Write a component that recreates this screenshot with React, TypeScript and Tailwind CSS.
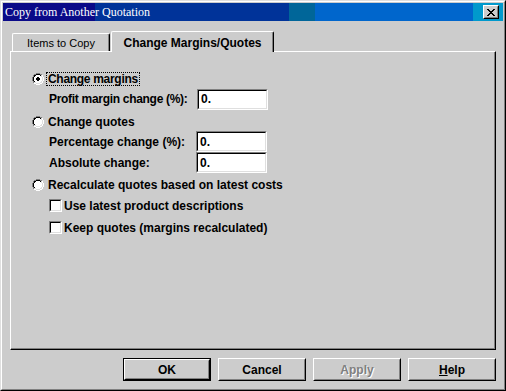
import React from "react";

const SANS = "font-['Liberation_Sans',Arial,sans-serif]";

function Radio({ checked }: { checked: boolean }) {
  const outer: number[][] = [
    [0, 4], [0, 5], [0, 6], [0, 7], [1, 2], [1, 3], [1, 8], [1, 9], [2, 1], [2, 10], [3, 1], [3, 10],
    [4, 0], [4, 11], [5, 0], [5, 11], [6, 0], [6, 11], [7, 0], [7, 11], [8, 1], [8, 10], [9, 1], [9, 10],
    [10, 2], [10, 3], [10, 8], [10, 9], [11, 4], [11, 5], [11, 6], [11, 7],
  ];
  const inner: number[][] = [
    [1, 4], [1, 5], [1, 6], [1, 7], [2, 2], [2, 3], [2, 8], [2, 9], [3, 2], [3, 9], [4, 1], [4, 10],
    [5, 1], [5, 10], [6, 1], [6, 10], [7, 1], [7, 10], [8, 2], [8, 9], [9, 2], [9, 3], [9, 8], [9, 9],
    [10, 4], [10, 5], [10, 6], [10, 7],
  ];
  const interior: number[][] = [];
  const spans: [number, number, number][] = [
    [2, 4, 7], [3, 3, 8], [4, 2, 9], [5, 2, 9], [6, 2, 9], [7, 2, 9], [8, 3, 8], [9, 4, 7],
  ];
  spans.forEach(([r, a, b]) => {
    for (let c = a; c <= b; c++) interior.push([r, c]);
  });
  const dot: number[][] = [
    [4, 5], [4, 6], [5, 4], [5, 5], [5, 6], [5, 7], [6, 4], [6, 5], [6, 6], [6, 7], [7, 5], [7, 6],
  ];
  return (
    <svg width="12" height="12" viewBox="0 0 12 12" shapeRendering="crispEdges" className="shrink-0">
      {interior.map(([r, c]) => (
        <rect key={"i" + r + "-" + c} x={c} y={r} width="1" height="1" fill="#ffffff" />
      ))}
      {outer.map(([r, c]) => (
        <rect key={"o" + r + "-" + c} x={c} y={r} width="1" height="1" fill={r + c < 11 ? "#808080" : "#ffffff"} />
      ))}
      {inner.map(([r, c]) => (
        <rect key={"n" + r + "-" + c} x={c} y={r} width="1" height="1" fill={r + c < 11 ? "#000000" : "#dfdfdf"} />
      ))}
      {checked &&
        dot.map(([r, c]) => <rect key={"d" + r + "-" + c} x={c} y={r} width="1" height="1" fill="#000000" />)}
    </svg>
  );
}

function Sunken({ className, children }: { className: string; children?: React.ReactNode }) {
  return (
    <div className={`border border-t-[#808080] border-l-[#808080] border-b-white border-r-white ${className}`}>
      <div className="w-full h-full border border-t-black border-l-black border-b-[#dfdfdf] border-r-[#dfdfdf] bg-white flex items-center">
        {children}
      </div>
    </div>
  );
}

function Checkbox() {
  return <Sunken className="w-[13px] h-[13px] shrink-0" />;
}

function TextBox({ value }: { value: string }) {
  return (
    <Sunken className="w-[71px] h-[21px]">
      <span className={`${SANS} text-[12px] font-bold pl-[2px] leading-none`}>{value}</span>
    </Sunken>
  );
}

function Button({ children, isDefault }: { children: React.ReactNode; isDefault?: boolean }) {
  const inner = (
    <div className="w-full h-full border border-t-white border-l-white border-b-black border-r-black">
      <div className="w-full h-full border border-t-[#cccccc] border-l-[#cccccc] border-b-[#808080] border-r-[#808080] flex items-center justify-center">
        {children}
      </div>
    </div>
  );
  return isDefault ? (
    <div className="w-[88px] h-[23px] border border-black">{inner}</div>
  ) : (
    <div className="w-[88px] h-[23px]">{inner}</div>
  );
}

export default function App() {
  return (
    <div className={`w-[506px] h-[391px] bg-[#cccccc] border border-t-[#dfdfdf] border-l-[#dfdfdf] border-b-black border-r-black ${SANS} text-black`}>
      <div className="w-full h-full border border-t-white border-l-white border-b-[#808080] border-r-[#808080] p-px flex flex-col">
        {/* Title bar */}
        <div className="relative h-[18px] shrink-0 flex items-center bg-[linear-gradient(90deg,#0a0a88_0px,#0a0a88_92px,#003399_92px,#003399_286px,#006699_286px,#006699_312px,#0066cc_312px,#0066cc_470px,#0099cc_470px,#0099cc_100%)]">
          <span className="pl-[2px] text-white text-[12px] leading-none font-['Liberation_Serif','Times_New_Roman',serif]">
            Copy from Another Quotation
          </span>
          <div className="absolute right-[4px] top-[2px] w-[16px] h-[14px] border border-t-white border-l-white border-b-black border-r-black bg-[#cccccc]">
            <div className="w-full h-full border border-t-[#cccccc] border-l-[#cccccc] border-b-[#808080] border-r-[#808080] flex items-center justify-center">
              <svg width="8" height="7" viewBox="0 0 8 7" shapeRendering="crispEdges">
                <path
                  d="M0 0h2v1H0zM6 0h2v1H6zM1 1h2v1H1zM5 1h2v1H5zM2 2h4v1H2zM3 3h2v1H3zM2 4h4v1H2zM1 5h2v1H1zM5 5h2v1H5zM0 6h2v1H0zM6 6h2v1H6z"
                  fill="#000"
                />
              </svg>
            </div>
          </div>
        </div>

        {/* Tabs */}
        <div className="h-[30px] shrink-0 flex items-end pl-[9px]">
          <div className="w-[98px] h-[18px] border-t border-l border-r border-t-white border-l-white border-r-black rounded-tl-[2px] rounded-tr-[2px] shadow-[inset_-1px_0_0_#808080] flex items-center justify-center pt-[2px]">
            <span className="text-[11px] leading-none">Items to Copy</span>
          </div>
          <div className="relative z-10 -mb-px ml-[1px] w-[163px] h-[21px] bg-[#cccccc] border-t border-l border-r border-t-white border-l-white border-r-black rounded-tl-[2px] rounded-tr-[2px] shadow-[inset_-1px_0_0_#808080] flex items-center justify-center pt-[1px]">
            <span className="text-[12px] font-bold leading-none">Change Margins/Quotes</span>
          </div>
        </div>

        {/* Panel */}
        <div className="mx-[7px] h-[299px] shrink-0 border border-t-white border-l-white border-b-black border-r-black">
          <div className="w-full h-full border-b border-r border-b-[#808080] border-r-[#808080] pt-[19px] flex flex-col text-[12px] font-bold leading-none">
            <div className="h-[16px] flex items-center pl-[21px]">
              <Radio checked />
              <span className="ml-[2px] h-[14px] border border-dotted border-black px-px flex items-center tracking-[-0.3px]">
                Change margins
              </span>
            </div>
            <div className="mt-[1px] h-[22px] flex items-center pl-[38px]">
              <span className="w-[148px] tracking-[-0.3px]">Profit margin change (%):</span>
              <TextBox value="0." />
            </div>
            <div className="mt-[4px] h-[16px] flex items-center pl-[21px]">
              <Radio checked={false} />
              <span className="ml-[3px] pl-px">Change quotes</span>
            </div>
            <div className="mt-[1px] h-[21px] flex items-center pl-[38px]">
              <span className="w-[147px]">Percentage change (%):</span>
              <TextBox value="0." />
            </div>
            <div className="h-[21px] flex items-center pl-[38px]">
              <span className="w-[147px]">Absolute change:</span>
              <TextBox value="0." />
            </div>
            <div className="mt-[4px] h-[16px] flex items-center pl-[21px]">
              <Radio checked={false} />
              <span className="ml-[3px] pl-px">Recalculate quotes based on latest costs</span>
            </div>
            <div className="mt-[4px] h-[17px] flex items-center pl-[38px]">
              <Checkbox />
              <span className="ml-[2px]">Use latest product descriptions</span>
            </div>
            <div className="mt-[5px] h-[17px] flex items-center pl-[38px]">
              <Checkbox />
              <span className="ml-[2px]">Keep quotes (margins recalculated)</span>
            </div>
          </div>
        </div>

        {/* Buttons */}
        <div className="mt-[8px] h-[23px] flex justify-end gap-[7px] pr-[7px] text-[12px] font-bold leading-none">
          <Button isDefault>OK</Button>
          <Button>Cancel</Button>
          <Button>
            <span className="text-[#808080] [text-shadow:1px_1px_0_#ffffff]">Apply</span>
          </Button>
          <Button>
            <span>
              <span className="underline">H</span>elp
            </span>
          </Button>
        </div>
      </div>
    </div>
  );
}
